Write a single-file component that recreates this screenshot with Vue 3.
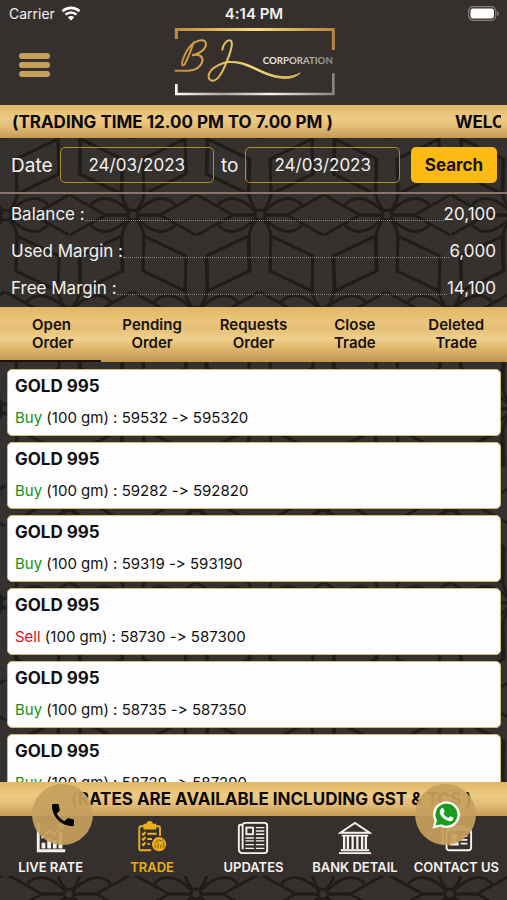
<template>
    <div class="app">
        <svg class="pattern" aria-hidden="true">
            <defs>
                <g id="petals" fill="none" stroke="#201d19" stroke-width="3" stroke-linejoin="round">
                    <circle r="5" />
                    <path v-for="p in petals" :key="p" :d="p" />
                    <path v-for="p in petals" :key="'m' + p" :d="p" transform="scale(-1 1)" />
                    <path v-for="p in petals" :key="'f' + p" :d="p" transform="scale(1 -1)" />
                    <path v-for="p in petals" :key="'r' + p" :d="p" transform="scale(-1 -1)" />
                </g>
                <pattern id="tile" x="6" y="118" width="127" height="194" patternUnits="userSpaceOnUse">
                    <use v-for="n in nodes" :key="n.join()" href="#petals" :x="n[0]" :y="n[1]" />
                </pattern>
            </defs>
            <rect width="100%" height="100%" fill="url(#tile)" />
        </svg>

        <header class="header">
            <div class="status">
                <div class="carrier">
                    <span>Carrier</span>
                    <svg width="20" height="15" viewBox="0 0 20 15" fill="none" stroke="#fff" stroke-width="2.6">
                        <path d="M1.5 5.2C6.3.8 13.7.8 18.500 5.2M4.500 8.600c3.200-2.900 7.800-2.900 11 0" />
                        <path d="M10 14.500 6.800 11.200c1.900-1.500 4.500-1.500 6.400 0z" fill="#fff" stroke="none" />
                    </svg>
                </div>
                <span class="clock">4:14 PM</span>
                <svg class="battery" width="31" height="15" viewBox="0 0 31 15">
                    <rect x=".7" y=".7" width="27" height="13.600" rx="4" fill="none" stroke="#85817f" stroke-width="1.200" />
                    <rect x="2.500" y="2.500" width="23.400" height="10" rx="2.200" fill="#fff" />
                    <path d="M29 5c2.200.8 2.200 4.200 0 5z" fill="#85817f" />
                </svg>
            </div>
            <div class="brand">
                <button class="menu" aria-label="Menu"><i></i><i></i><i></i></button>
                <svg class="logo" width="175" height="76" viewBox="0 0 525 228" fill="none">
                    <defs>
                        <linearGradient id="gold" gradientUnits="userSpaceOnUse" x1="25" y1="0" x2="507" y2="0">
                            <stop offset="0" stop-color="#c08a3c" />
                            <stop offset=".25" stop-color="#e0b356" />
                            <stop offset=".5" stop-color="#f5e27a" />
                            <stop offset="1" stop-color="#b9823a" />
                        </linearGradient>
                        <linearGradient id="silver" gradientUnits="userSpaceOnUse" x1="25" y1="0" x2="507" y2="0">
                            <stop offset="0" stop-color="#fff" />
                            <stop offset=".3" stop-color="#a9a6a5" />
                            <stop offset=".6" stop-color="#f4f4f4" />
                            <stop offset="1" stop-color="#85817f" />
                        </linearGradient>
                    </defs>
                    <path d="M31 36V7.500H502V69" stroke="url(#gold)" stroke-width="9" />
                    <path d="M31 171v30H502v-62" stroke="url(#silver)" stroke-width="8" />
                    <g stroke="url(#gold)" stroke-linecap="round">
                        <path d="M83 46C76 66 67 92 56 112c-9 10-10-4-4-18C63 65 82 43 105 40c22-2 19 24-5 37-9 5-17 7-22 8 31-7 39 13 24 31-10 13-22 15-36 15H28" stroke-width="6" />
                        <path d="M169 68c2-15 12-29 23-28 13 3 1 38-12 69-10 25-24 54-42 52-17-3-12-27 8-40 14-10 29-15 45-17" stroke-width="6" />
                        <path d="M188 104c62-7 98 42 163 45 20 1 37-4 52-11-17 15-34 17-52 16-65-4-101-50-163-48z" fill="url(#gold)" stroke-width="3" />
                    </g>
                    <text x="290" y="112" class="corp">CORPORATION</text>
                </svg>
            </div>
        </header>

        <div class="ticker">
            <span>(TRADING TIME 12.00 PM TO 7.00 PM )</span>
            <span class="next">WELCOME TO BJ CORPORATION</span>
        </div>

        <form class="filter" @submit.prevent>
            <label for="from">Date</label>
            <input id="from" v-model="from" type="text" />
            <label for="to">to</label>
            <input id="to" v-model="to" type="text" />
            <button>Search</button>
        </form>

        <dl class="summary">
            <div v-for="row in summary" :key="row.label">
                <dt>{{ row.label }} :</dt>
                <dd>{{ row.value }}</dd>
            </div>
        </dl>

        <nav class="tabs">
            <button v-for="(tab, i) in tabs" :key="tab" :class="{ active: i === current }" @click="current = i">
                {{ tab }}
            </button>
        </nav>

        <main class="orders">
            <article v-for="(o, i) in orders" :key="i">
                <h2>GOLD 995</h2>
                <p><b :class="o.type">{{ o.type }}</b> (100 gm) : {{ o.rate }} -> {{ o.rate * 10 }}</p>
            </article>
        </main>

        <footer class="footer">
            <div class="ticker rates">
                <span>(RATES ARE AVAILABLE INCLUDING GST &amp; TCS )</span>
            </div>
            <nav class="bottom">
                <a href="#live">
                    <svg viewBox="0 0 36 36" fill="currentColor">
                        <path d="M3 2h3v28h27v3H3z" />
                        <path d="M8 23h4v6H8zM14 18h4v11h-4zM20 20h4v9h-4zM26 12h4v17h-4z" />
                        <path d="m8 18 8-8 6 4 8-10M25 4h5v5" fill="none" stroke="currentColor" stroke-width="2" />
                    </svg>
                    LIVE RATE
                </a>
                <a href="#trade" class="on">
                    <svg viewBox="0 0 36 36" fill="none" stroke="currentColor" stroke-width="2">
                        <path d="M17 31H6.500a2 2 0 0 1-2-2V7.500a2 2 0 0 1 2-2H10M21 5.500h3.500a2 2 0 0 1 2 2V16" />
                        <path d="M10 4h3c0-4 5-4 5 0h3.500v4H10z" fill="currentColor" />
                        <path d="m7.500 13 1.500 1.500 2-3M13 13.500h10m-15.500 5 1.500 1.500 2-3M13 19h5M7.500 24l1.500 1.500 2-3m2 2h3" />
                        <circle cx="25.500" cy="24.500" r="7.500" fill="currentColor" stroke="none" />
                        <path d="M21.500 29v-4m3 4v-6m3 6v-4m3 4v-7M21 23l4-3 3 1 3-3" stroke="#745616" stroke-width="1" />
                    </svg>
                    TRADE
                </a>
                <a href="#updates">
                    <svg viewBox="0 0 36 36" fill="none" stroke="currentColor" stroke-width="2">
                        <path d="M7 4H5a2 2 0 0 0-2 2v24c0 3 2 4 4 4M7 30V5a3 3 0 0 1 3-3h20a3 3 0 0 1 3 3v26a3 3 0 0 1-3 3H6" />
                        <rect x="11" y="7" width="7" height="7" />
                        <path d="M21 7h9m-9 3.500h9M21 14h9M10 18h9m2 0h9M10 21h9m2 0h9M10 25h9m2 0h9M10 29h9m2 0h9" stroke-width="1.500" />
                    </svg>
                    UPDATES
                </a>
                <a href="#bank">
                    <svg viewBox="0 0 36 36" fill="none" stroke="currentColor" stroke-width="2">
                        <path d="M2.500 12.500 18 2l15.500 10.500zM4 15.500h28M3 31h30M1 34h34" />
                        <path d="M6.500 16v14m4-14v14m5-14v14m5-14v14m5-14v14m4-14v14" stroke-width="2.400" />
                    </svg>
                    BANK DETAIL
                </a>
                <a href="#contact">
                    <svg viewBox="0 0 36 36" fill="none" stroke="currentColor" stroke-width="2">
                        <path d="M4 25V8a2 2 0 0 1 2-2h22" />
                        <rect x="8" y="9" width="26" height="22" rx="3" />
                        <circle cx="16" cy="17" r="2.500" fill="currentColor" />
                        <path d="M12 25c0-5 8-5 8 0zM23 16h7m-7 4h7m-7 4h7" fill="currentColor" />
                    </svg>
                    CONTACT US
                </a>
            </nav>
            <button class="fab call" aria-label="Call">
                <svg width="24" height="24" viewBox="0 0 24 24">
                    <path d="M1 2.500C1 1.500 1.500 1 2.500 1H6.500c.8 0 1.300.5 1.400 1.300.1 1.600.4 3 .8 4.300.2.600 0 1.200-.4 1.600L5.800 10.500c1.900 3.700 4 5.800 7.700 7.700l2.300-2.500c.4-.4 1-.6 1.600-.4 1.300.4 2.700.700 4.300.8.8.1 1.300.6 1.300 1.400v4c0 1-.5 1.500-1.500 1.500C10.200 23 1 13.800 1 2.500z" />
                </svg>
            </button>
            <button class="fab chat" aria-label="WhatsApp">
                <svg width="28" height="28" viewBox="0 0 28 28">
                    <path d="M.5 27.500 2.600 20A13.500 13.300 0 1 1 8.500 25.600z" fill="#fff" />
                    <path d="m3.500 24.600 1.500-5.300a11 11 0 1 1 4 3.900z" fill="#1a9b1f" />
                    <path d="M9.500 7.500c.7-.7 1.500-.6 1.900.1l1.200 2.700c.2.500-.9 1.600-1.200 2.100 1.300 2.300 2.900 3.600 5.100 4.500.6-.6 1.300-1.900 1.900-1.700l2.700 1.300c.8.4.3 2-.4 2.700-1.600 1.500-4 1.200-6.600-.1-3-1.500-5.200-3.900-6.100-6.600-.6-2-.1-3.800 1.500-5z" fill="#fff" />
                </svg>
            </button>
        </footer>
    </div>
</template>

<script setup>
import { ref } from 'vue'
const from = ref('24/03/2023'),
    to = ref('24/03/2023'),
    current = ref(0),
    tabs = ['Open Order', 'Pending Order', 'Requests Order', 'Close Trade', 'Deleted Trade'],
    summary = [
        { label: 'Balance', value: '20,100' },
        { label: 'Used Margin', value: '6,000' },
        { label: 'Free Margin', value: '14,100' }
    ],
    orders = [
        { type: 'Buy', rate: 59532 },
        { type: 'Buy', rate: 59282 },
        { type: 'Buy', rate: 59319 },
        { type: 'Sell', rate: 58730 },
        { type: 'Buy', rate: 58735 },
        { type: 'Buy', rate: 58729 }
    ]
// one quarter of the flower, mirrored into the other three
const petals = [
    'M5 0H27L63 20',
    'M11 21L10 56L52 76L53 41Z',
    'M3 4C8 10 11 15 11 22',
    'M4 3C14 14 30 23 42 10'
]
const nodes = [[0, 97], [127, 97], [63, 0], [63, 194]]
</script>

<style>
body {
    margin: 0;
    background: #35312f;
}
</style>

<style scoped>
.app {
    position: relative;
    display: flex;
    flex-direction: column;
    height: 100vh;
    overflow: hidden;
    color: #f2f0ef;
    font-family: Inter, "Liberation Sans", sans-serif;
    /* keeps "->" as two characters */
    font-feature-settings: "calt" 0;

    & * {
        box-sizing: border-box;
    }

    & button,
    & input {
        font-family: inherit;
        cursor: pointer;
    }
}

.pattern {
    position: absolute;
    inset: 0;
    width: 100%;
    height: 100%;
    z-index: -1;
}

.header {
    background: #35302d;
    height: 105px;
}

.status {
    display: grid;
    grid-template-columns: 1fr auto 1fr;
    align-items: center;
    height: 27px;
    padding: 0 8px 0 9px;
    font-size: 14px;

    & .carrier {
        display: flex;
        align-items: center;
        gap: 6px;
    }

    & .clock {
        font-size: 15px;
        font-weight: 600;
    }

    & .battery {
        justify-self: end;
    }
}

.brand {
    display: grid;
    grid-template-columns: 1fr auto 1fr;
    align-items: center;

    & .menu {
        display: flex;
        flex-direction: column;
        justify-self: start;
        gap: 3px;
        margin-left: 19px;
        padding: 0;
        border: 0;
        background: none;
    }

    & i {
        width: 31px;
        height: 6px;
        border-radius: 3px;
        background: #c5a05b;
    }
}

.corp {
    font: 700 29px Lato, sans-serif;
    fill: url(#silver);
}

.ticker {
    display: flex;
    align-items: center;
    flex: none;
    height: 33px;
    padding: 0 6px 0 12px;
    overflow: hidden;
    white-space: nowrap;
    color: #0b0803;
    font-size: 17px;
    font-weight: 700;
    background: linear-gradient(#dfb765, #edcb84 40%, #e2bd76 65%, #c59b56);

    & .next {
        flex: 1;
        width: 0;
        margin-left: 122px;
        overflow: hidden;
    }
}

.filter {
    display: flex;
    align-items: center;
    gap: 7px;
    height: 56px;
    padding: 0 10px 0 11px;
    border-bottom: 2px solid #8c746b;
    font-size: 19px;

    & input {
        flex: 1;
        min-width: 0;
        height: 36px;
        padding: 0;
        border: 1px solid #b58d1c;
        border-radius: 5px;
        background: none;
        color: inherit;
        font-size: 17px;
        text-align: center;
    }

    & button {
        width: 86px;
        height: 36px;
        margin-left: 4px;
        padding: 0;
        border: 0;
        border-radius: 5px;
        background: #fcba12;
        color: #17120a;
        font-size: 17px;
        font-weight: 700;
    }
}

.summary {
    margin: 0;
    padding: 1px 11px;

    & div {
        display: flex;
        align-items: center;
        height: 37px;
        font-size: 17px;
    }

    & dd {
        display: flex;
        flex: 1;
        margin: 0;
    }

    & dd::before {
        content: '';
        flex: 1;
        height: 16px;
        border-bottom: 1px dotted #8d8987;
    }
}

.tabs {
    display: grid;
    grid-template-columns: repeat(5, 1fr);
    flex: none;
    height: 55px;
    background: linear-gradient(#dfb765, #ebc57c 25%, #e6c078 40%, #efd08c 58%, #e2bb70 72%, #bf9551);

    & button {
        padding: 0 12px;
        border: 0;
        border-bottom: 2px solid transparent;
        background: none;
        color: #17120a;
        font-size: 15px;
        font-weight: 600;
        line-height: 18px;
    }

    & .active {
        padding: 0 24px 0 32px;
        border-color: #17120a;
        text-align: left;
    }
}

.orders {
    display: flex;
    flex-direction: column;
    flex: 1;
    gap: 6px;
    min-height: 0;
    padding: 7px 6px 0 7px;
    overflow: hidden;

    & article {
        flex: none;
        height: 67px;
        padding: 6px 7px;
        border: 1px solid #d6b876;
        border-radius: 5px;
        background: #fdfdfd;
        color: #111;
    }

    & h2 {
        margin: 0;
        font-size: 17px;
        font-weight: 700;
        line-height: 20px;
    }

    & p {
        margin: 12px 0 0;
        font-size: 15px;
        line-height: 20px;
    }

    & b {
        font-weight: 400;
    }

    & .Buy {
        color: #15921c;
    }

    & .Sell {
        color: #d6121f;
    }
}

.footer {
    position: relative;
    flex: none;
    padding-bottom: 24px;
}

.rates {
    height: 34px;
    padding-left: 71px;
}

.bottom {
    display: grid;
    grid-template-columns: repeat(5, 1fr);
    height: 60px;
    background: #35302d;

    & a {
        display: flex;
        flex-direction: column;
        align-items: center;
        gap: 4px;
        padding-top: 5px;
        color: #f5f3f2;
        font-size: 13px;
        font-weight: 600;
        line-height: 16px;
        text-decoration: none;
        white-space: nowrap;
    }

    & svg {
        width: 34px;
        height: 34px;
    }

    & .on {
        color: #edae1b;
    }
}

.fab {
    position: absolute;
    top: 2px;
    display: grid;
    place-items: center;
    width: 61px;
    height: 61px;
    padding: 0;
    border: 0;
    border-radius: 50%;
    background: rgba(198, 160, 92, 0.93);

    &.call {
        left: 32px;
    }

    &.chat {
        right: 31px;
    }
}
</style>
